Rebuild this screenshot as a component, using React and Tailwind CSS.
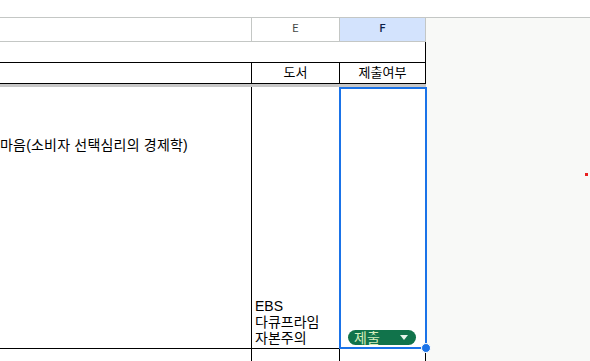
export default function App() {
  const font = { fontFamily: "Arial, 'Liberation Sans', 'Noto Sans CJK KR', sans-serif" };
  return (
    <div className="relative w-[590px] h-[361px] overflow-hidden bg-white text-[13px] text-black" style={font}>
      <div className="h-[18px] border-b border-[#c4c7c5] bg-white" />
      <div className="flex">
        <div className="w-[426px] shrink-0">
          {/* column header */}
          <div className="flex h-[24px] border-b border-[#c4c7c5] text-[11px]" style={{ fontFamily: "Roboto, 'Liberation Sans', sans-serif" }}>
            <div className="w-[252px] border-r border-[#c4c7c5]" />
            <div className="w-[88px] border-r border-[#c4c7c5] flex items-center justify-center text-[#444746]">E</div>
            <div className="w-[86px] border-r border-[#c4c7c5] bg-[#d3e3fd] flex items-center justify-center font-medium text-[#0b1f4a]">F</div>
          </div>
          {/* row 1 merged */}
          <div className="h-[20px] border-r border-black" />
          {/* row 2 */}
          <div className="flex h-[22px] border-y border-black">
            <div className="w-[252px] border-r border-black" />
            <div className="w-[88px] border-r border-black flex items-center justify-center">도서</div>
            <div className="w-[86px] border-r border-black flex items-center justify-center">제출여부</div>
          </div>
          <div className="h-[3px] bg-[#c7c7c7]" />
          {/* row 3 */}
          <div className="relative flex h-[262px] border-b border-black text-[14px]">
            <div className="w-[252px] border-r border-black pt-[49px] whitespace-nowrap overflow-hidden leading-[18px] tracking-[0.2px]">
              마음(소비자 선택심리의 경제학)
            </div>
            <div className="w-[88px] border-r border-black flex flex-col justify-end pl-[3px] pb-[2px] leading-[16px]">
              <span>EBS</span>
              <span>다큐프라임</span>
              <span>자본주의</span>
            </div>
            <div className="w-[86px] border-r border-black flex items-end pl-[8px] pb-[3px]">
              <div className="flex items-center justify-between w-[68px] h-[15px] rounded-full bg-[#11734b] pl-[6px] pr-[8px] text-[#d4edbc] leading-none">
                <span>제출</span>
                <svg width="8" height="5" viewBox="0 0 8 5"><path d="M0 0 L8 0 L4 5 Z" fill="#e6f4ea" /></svg>
              </div>
            </div>
            <div className="absolute left-[339px] top-0 w-[88px] h-[262px] border-2 border-[#1a73e8] pointer-events-none z-10" />
            <div className="absolute left-[421px] top-[256px] w-[10px] h-[10px] rounded-full bg-[#1a73e8] border border-white z-10" />
          </div>
          {/* row 4 */}
          <div className="flex h-[20px]">
            <div className="w-[252px] border-r border-black" />
            <div className="w-[88px] border-r border-black" />
            <div className="w-[86px] border-r border-black" />
          </div>
        </div>
        <div className="relative flex-1 h-[343px] bg-[#f8f9f7]">
          <div className="absolute left-[159px] top-[155px] w-[3px] h-[3px] bg-[#e82020]" />
        </div>
      </div>
    </div>
  );
}
